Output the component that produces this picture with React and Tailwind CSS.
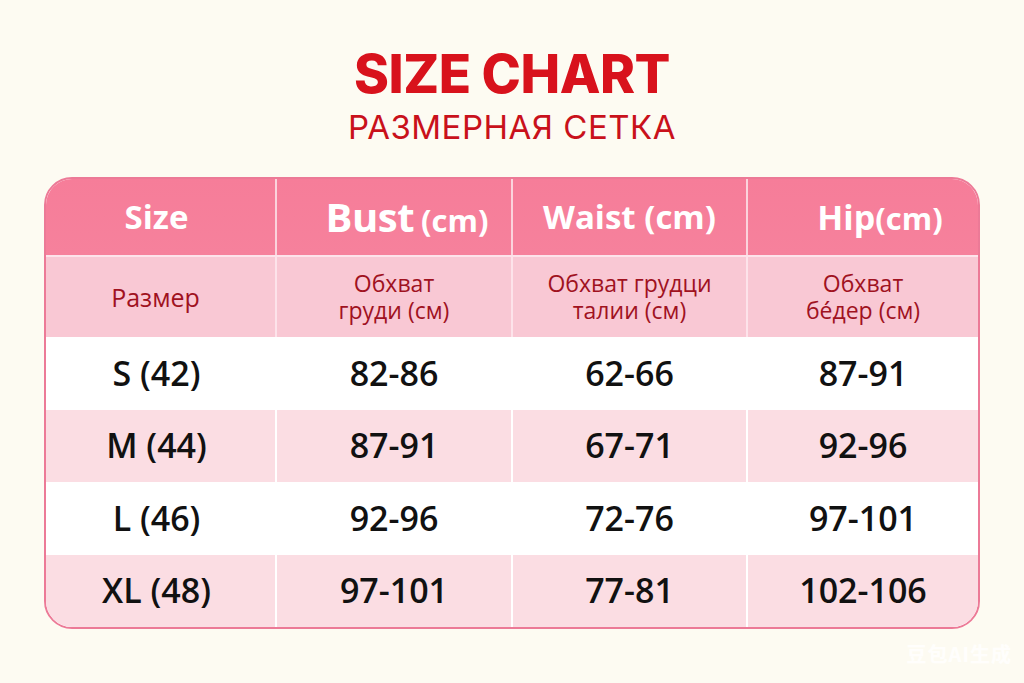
const columns = [
    { en: 'Size', ru: ['Размер'] },
    { en: 'Bust', unit: '(cm)', ru: ['Обхват', 'груди (см)'] },
    { en: 'Waist (cm)', ru: ['Обхват грудци', 'талии (см)'] },
    { en: 'Hip', unit: '(cm)', ru: ['Обхват', 'бе́дер (см)'] },
];

const rows = [
    ['S (42)', '82-86', '62-66', '87-91'],
    ['M (44)', '87-91', '67-71', '92-96'],
    ['L (46)', '92-96', '72-76', '97-101'],
    ['XL (48)', '97-101', '77-81', '102-106'],
];

const font = { fontFamily: '"Open Sans", "Noto Sans", "Noto Sans CJK SC", sans-serif' };

export default function App() {
    return (
        <div className="w-[1024px] h-[683px] bg-[#fdfbf2] relative overflow-hidden" style={font}>
            {/* Title */}
            <div className="flex flex-col items-center pt-[42px]">
                <h1 className="text-[53px] leading-[64px] font-extrabold text-[#d8121c] tracking-[-0.5px]" style={{ fontFamily: 'Inter, "Noto Sans", sans-serif' }}>SIZE CHART</h1>
                <h2 className="text-[33px] leading-[40px] text-[#c9111b] tracking-[0.5px] mt-[1px]" style={{ fontFamily: 'Inter, "Noto Sans", sans-serif' }}>РАЗМЕРНАЯ СЕТКА</h2>
            </div>

            {/* Table */}
            <div className="mx-[44px] mt-[30px] rounded-[28px] border-2 border-[#ec7a97] overflow-hidden bg-white">
                <div className="grid grid-cols-[229px_236px_235px_1fr]">
                    {columns.map((c, i) => (
                        <div key={'h' + i} className={`h-[76px] flex items-center justify-center bg-gradient-to-b from-[#f67d99] to-[#f6819c] text-white font-bold ${i > 0 ? 'border-l-2 border-[#fbd3dc]' : ''} ${i === 3 ? 'pl-[34px]' : ''} ${i === 1 ? 'pl-[26px]' : ''}`}>
                            {c.unit ? (
                                <span className="flex items-baseline">
                                    <span className={i === 1 ? 'text-[40px] tracking-[-0.5px]' : 'text-[34px]'}>{c.en}</span>
                                    <span className={`text-[31px] ${i === 1 ? 'ml-[7px]' : ''}`}>{c.unit}</span>
                                </span>
                            ) : (
                                <span className={`text-[33px] ${i === 0 ? 'pr-[8px]' : ''}`}>{c.en}</span>
                            )}
                        </div>
                    ))}
                    {columns.map((c, i) => (
                        <div key={'s' + i} className={`h-[82px] flex flex-col items-center justify-center bg-[#f9c8d4] border-t-2 border-[#fde3ea] text-[#a0121f] text-[23px] leading-[27px] ${i > 0 ? 'border-l-2 border-l-[#fde3ea]' : ''}`}>
                            {c.ru.map((l, j) => (
                                <span key={j} className={i === 0 ? 'text-[25px] pr-[10px]' : ''}>{l}</span>
                            ))}
                        </div>
                    ))}
                    {rows.map((r, ri) => r.map((v, ci) => (
                        <div key={ri + '-' + ci} className={`h-[72.5px] flex items-center justify-center text-[34px] font-semibold text-[#111] ${ri % 2 ? 'bg-[#fbdde3]' : 'bg-white'} ${ci > 0 ? 'border-l-2 border-white' : ''} ${ci === 0 ? 'pr-[8px]' : ''}`}>
                            {v}
                        </div>
                    )))}
                </div>
            </div>

            {/* Watermark */}
            <div className="absolute right-[12px] bottom-[14px] text-[20px] font-bold text-white/80 tracking-[1px]" style={{ fontFamily: '"Noto Sans CJK SC", sans-serif' }}>豆包AI生成</div>
        </div>
    );
}
